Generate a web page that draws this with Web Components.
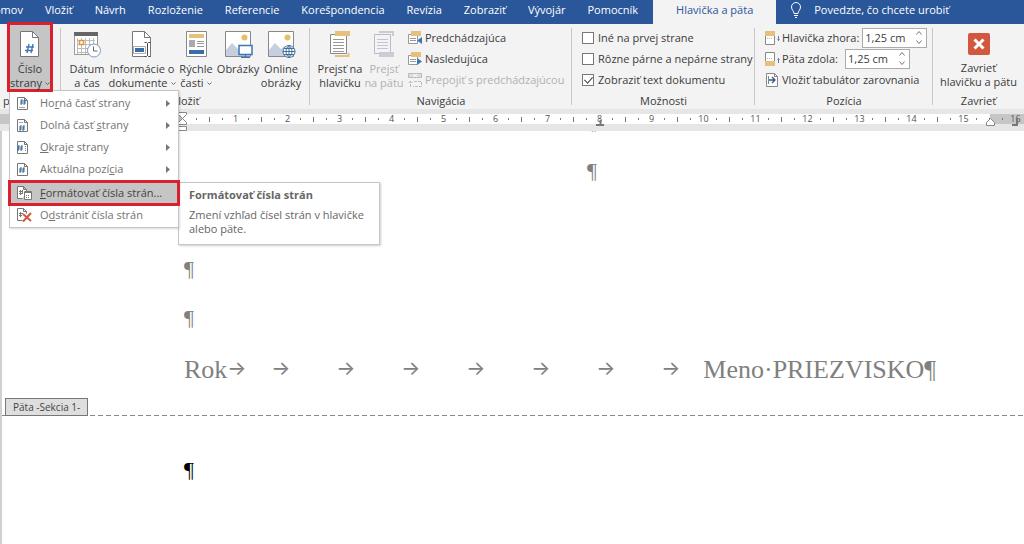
<!DOCTYPE html>
<html lang="sk">
<head>
<meta charset="utf-8">
<title>Hlavička a päta</title>
<style>
	html, body {
		height: 100%;
		margin: 0;
	}

	body {
		background: #fff;
		color: #3b3b3b;
		display: flex;
		flex-direction: column;
		font: 11px/14px "Open Sans", "Noto Sans", sans-serif;
		overflow: hidden;
	}
</style>
</head>
<body>
<ribbon-tabs>
	<ribbon-tab>Domov</ribbon-tab>
	<ribbon-tab>Vložiť</ribbon-tab>
	<ribbon-tab>Návrh</ribbon-tab>
	<ribbon-tab>Rozloženie</ribbon-tab>
	<ribbon-tab>Referencie</ribbon-tab>
	<ribbon-tab>Korešpondencia</ribbon-tab>
	<ribbon-tab>Revízia</ribbon-tab>
	<ribbon-tab>Zobraziť</ribbon-tab>
	<ribbon-tab>Vývojár</ribbon-tab>
	<ribbon-tab>Pomocník</ribbon-tab>
	<ribbon-tab active>Hlavička a päta</ribbon-tab>
	<ribbon-tab icon="bulb">Povedzte, čo chcete urobiť</ribbon-tab>
</ribbon-tabs>

<ribbon-bar>
	<ribbon-group label="päta" style="--w: 61px; --align: left; --pad: 10px">
		<ribbon-button icon="pageNumber" pressed arrow style="--w: 40px">Číslo<br>strany</ribbon-button>
		<drop-menu slot="popup">
			<menu-item icon="top" sub>Ho<u>r</u>ná časť strany</menu-item>
			<menu-item icon="bottom" sub>Dolná časť <u>s</u>trany</menu-item>
			<menu-item icon="margins" sub><u>O</u>kraje strany</menu-item>
			<menu-item icon="current" sub>Aktuálna pozí<u>c</u>ia</menu-item>
			<menu-item icon="format" marked><u>F</u>ormátovať čísla strán...</menu-item>
			<menu-item icon="remove">O<u>d</u>strániť čísla strán</menu-item>
		</drop-menu>
		<tool-tip slot="popup">
			<b slot="title">Formátovať čísla strán</b>
			Zmení vzhľad čísel strán v hlavičke alebo päte.
		</tool-tip>
	</ribbon-group>
	<ribbon-group label="Vložiť" style="--w: 249px">
		<ribbon-button icon="date" style="--w: 52px">Dátum<br>a čas</ribbon-button>
		<ribbon-button icon="info" arrow style="--w: 58px">Informácie o<br>dokumente</ribbon-button>
		<ribbon-button icon="parts" arrow style="--w: 50px">Rýchle<br>časti</ribbon-button>
		<ribbon-button icon="pictures" style="--w: 34px">Obrázky</ribbon-button>
		<ribbon-button icon="online" style="--w: 52px">Online<br>obrázky</ribbon-button>
	</ribbon-group>
	<ribbon-group label="Navigácia" style="--w: 262px; --pad: 8px">
		<ribbon-button icon="header" style="--w: 44px">Prejsť na<br>hlavičku</ribbon-button>
		<ribbon-button icon="footer" disabled style="--w: 44px">Prejsť<br>na pätu</ribbon-button>
		<ribbon-stack>
			<small-button icon="prev">Predchádzajúca</small-button>
			<small-button icon="next">Nasledujúca</small-button>
			<small-button icon="link" disabled>Prepojiť s predchádzajúcou</small-button>
		</ribbon-stack>
	</ribbon-group>
	<ribbon-group label="Možnosti" style="--w: 183px; --pad: 8px">
		<ribbon-stack>
			<check-option label="Iné na prvej strane"></check-option>
			<check-option label="Rôzne párne a nepárne strany"></check-option>
			<check-option label="Zobraziť text dokumentu" checked></check-option>
		</ribbon-stack>
	</ribbon-group>
	<ribbon-group label="Pozícia" style="--w: 178px; --pad: 8px">
		<ribbon-stack>
			<spin-option icon="fromTop" label="Hlavička zhora:" value="1,25 cm"></spin-option>
			<spin-option icon="fromBottom" label="Päta zdola:" value="1,25 cm"></spin-option>
			<small-button icon="tab">Vložiť tabulátor zarovnania</small-button>
		</ribbon-stack>
	</ribbon-group>
	<ribbon-group label="Zavrieť" last style="--w: 91px">
		<ribbon-button icon="close" style="--w: 91px">Zavrieť<br>hlavičku a pätu</ribbon-button>
	</ribbon-group>
</ribbon-bar>

<page-ruler></page-ruler>

<doc-page>
	<doc-line center>¶</doc-line>
	<doc-line center>¶</doc-line>
	<doc-line></doc-line>
	<doc-line>¶</doc-line>
	<doc-line>¶</doc-line>
	<doc-line class="footer" tabs="8"><span slot="start">Rok</span>Meno·PRIEZVISKO¶</doc-line>
	<section-mark>Päta -Sekcia 1-</section-mark>
	<doc-line class="body">¶</doc-line>
</doc-page>

<script>
const sheet = '<path d="M.5.5h12l6 6v19H.5z" fill="#fff" stroke="#777"/><path d="M12.5.5v6h6" fill="none" stroke="#777"/>';
const smallSheet = '<path d="M.5.5h7l3 3v9H.5z" fill="#fff" stroke="#777"/><path d="M7.5.5v3h3" fill="none" stroke="#777"/>';
const hash = (x, y) => `<path d="M${x + 2} ${y}l-1 6M${x + 5} ${y}l-1 6M${x} ${y + 2}h6M${x} ${y + 4}h6" stroke="#41719c" fill="none"/>`;
const picture = '<path d="M.5.5h25v25H.5z" fill="#fff" stroke="#888"/><path d="M1 25V19l6-7 6 6 3-3 9 9v1z" fill="#c5cfdd"/><circle cx="19.500" cy="6.500" r="3" fill="#e8bd6a"/>';

// name: [width, height, markup]
const icons = {
	bulb: [12, 16, '<path d="M4 11.500C4 9 1.500 8 1.500 5a4.500 4.500 0 0 1 9 0c0 3-2.500 4-2.500 6.500zM4 13.500h4M5 15.500h2" fill="none" stroke="#fff"/>'],
	pageNumber: [20, 26, sheet + '<path d="M9 13l-2 9M13 13l-2 9M6 16h8M5 19.500h8" stroke="#3e76b5" stroke-width="1.300" fill="none"/>'],
	date: [27, 26, '<path d="M.5 1.500h23v22H.5z" fill="#fff" stroke="#999"/><path d="M0 1h24v4H0z" fill="#666"/><path d="M3 9.500h18M3 13.500h18M3 17.500h18M3 21.500h12M3.500 7v16M7.500 7v16M11.500 7v16M15.500 7v16M19.500 7v10" stroke="#bbb" fill="none"/><path d="M5.500 9.500h4v4h-4z" fill="#fff" stroke="#e0963c" stroke-width="1.500"/><circle cx="20" cy="19.500" r="6.500" fill="#fff" stroke="#7b9cc0"/><path d="M19.500 15.500v4.500h4" fill="none" stroke="#666"/>'],
	info: [20, 26, sheet + '<path d="M3 17h9v4H3z" fill="#3b6ba8"/><path d="M1.500 15.500h12v7h-12z" fill="none" stroke="#aaa"/><path d="M14 10h4v16h-4z" fill="#fff"/><path d="M12.500 11.500h2l1 1 1-1h2M12.500 25.500h2l1-1 1 1h2M15.500 12.500v12" fill="none" stroke="#444"/>'],
	parts: [21, 26, '<path d="M.5.5h20v25H.5z" fill="#fff" stroke="#888"/><path d="M3 3h15v4H3z" fill="#e8c078"/><path d="M3 9h6v7H3z" fill="#aaa"/><path d="M11 10.500h7M11 12.500h7M11 15.500h7" stroke="#999"/><path d="M3 19h15v4H3z" fill="#3b6ba8"/>'],
	pictures: [27, 26, picture + '<path d="M14 14.500h13v9H14z" fill="#fff" stroke="#3b76b5" stroke-width="1.500"/><path d="M20.500 24v2M16 26.500h9" stroke="#3b76b5"/>'],
	online: [27, 26, picture + '<circle cx="21" cy="20.500" r="6" fill="#fff" stroke="#41719c"/><path d="M15 20.500h12M16 17.500h10M16 23.500h10M21 14.500v12M21 14.500c-4 3-4 9 0 12M21 14.500c4 3 4 9 0 12" fill="none" stroke="#41719c"/>'],
	header: [20, 26, '<path d="M.5 3.500h16v19H.5z" fill="#fff" stroke="#888"/><path d="M5 0h15v5H5z" fill="#e6c07e"/><path d="M3 8.500h11M3 11.500h11M3 14.500h11M3 17.500h11M3 20.500h11" stroke="#999"/><path d="M5 25h14M18.500 22v4" stroke="#e6c07e" stroke-width="2"/>'],
	footer: [20, 26, '<path d="M.5 3.500h16v19H.5z" fill="#f4f4f8" stroke="#bbb"/><path d="M5 1h14v4" fill="none" stroke="#ccc" stroke-width="2"/><path d="M3 8.500h11M3 11.500h11M3 14.500h11M3 17.500h11" stroke="#c4c4cc"/><path d="M5 21h15v5H5z" fill="#ccccd4"/>'],
	prev: [14, 14, '<path d="M.5 3.500h9v9H.5z" fill="#fff" stroke="#999"/><path d="M3 0h10v5H3z" fill="#e6c07e"/><path d="M2 7.500h6M2 9.500h6" stroke="#999"/><path d="M14 6v7l-5-3.500z" fill="#3b76b5"/>'],
	next: [14, 14, '<path d="M.5 3.500h9v9H.5z" fill="#fff" stroke="#999"/><path d="M3 0h10v5H3z" fill="#e6c07e"/><path d="M2 7.500h6M2 9.500h6" stroke="#999"/><path d="M9 6v7l5-3.500z" fill="#3b76b5"/>'],
	link: [14, 14, '<path d="M.5.500h13v4H.5z" fill="#ddd" stroke="#bbb"/><path d="M5 1l4 3M9 1l-4 3" stroke="#fff"/><path d="M2.500 14V8M.5 10l2-2 2 2M6 8.500h7.500v5H5" fill="none" stroke="#bbb" stroke-dasharray="3 1"/>'],
	fromTop: [14, 14, '<path d="M.5 5v8.500h9V5" fill="#fff" stroke="#888"/><path d="M0 0h10v5H0z" fill="#e6c07e"/><path d="M2 7.500h6" stroke="#bbb" stroke-dasharray="1 1"/><path d="M13.500 5v5M12.500 8.500h2" fill="none" stroke="#557ba8"/>'],
	fromBottom: [14, 14, '<path d="M.5 9V.5h9V9" fill="#fff" stroke="#888"/><path d="M0 9h10v5H0z" fill="#e6c07e"/><path d="M2 6.500h6" stroke="#bbb" stroke-dasharray="1 1"/><path d="M13.500 6v5M12.500 7.500h2" fill="none" stroke="#557ba8"/>'],
	tab: [14, 14, '<path d="M1.500.5h8l3 3v10h-11z" fill="#fff" stroke="#888"/><path d="M9.500.5v3h3M3.500 3v8" fill="none" stroke="#888"/><path d="M4 7h6M7 4l3 3-3 3" fill="none" stroke="#35568a" stroke-width="1.300"/>'],
	close: [22, 22, '<rect width="22" height="22" rx="2" fill="#d1583f"/><path d="M6.500 6.500l9 9M15.500 6.500l-9 9" stroke="#fff" stroke-width="3"/>'],
	top: [14, 13, smallSheet + hash(3, 2) + '<path d="M2 10.500h6" stroke="#aaa"/>'],
	bottom: [14, 13, smallSheet + hash(2, 6) + '<path d="M2 3.500h4" stroke="#aaa"/>'],
	margins: [14, 13, smallSheet + hash(0, 4) + '<path d="M8 5.500h1M8 7.500h1M8 9.500h1" stroke="#888"/>'],
	current: [14, 13, smallSheet + hash(2, 4)],
	format: [16, 14, '<path d="M5.500 12.500h-5V.5h6l3 3v2M6.500.5v3h3" fill="#fff" stroke="#777"/><path d="M2 5.500h4M2 7.500h4M3.500 4v5M5.500 4v3" stroke="#777"/><path d="M7.500 5.500h7v8h-7z" fill="#fff" stroke="#777"/><path d="M8 6.500h6" stroke="#777"/><path d="M9 9.500h4M9 11.500h4" stroke="#777" stroke-dasharray="1 1"/>'],
	remove: [16, 14, '<path d="M5.500 12.500h-5V.5h6l3 3v2M6.500.5v3h3" fill="#fff" stroke="#777"/><path d="M2 5.500h4M2 7.500h3M3.500 4v5" stroke="#777"/><path d="M6 6l8 7M14 5l-8 8.500" stroke="#d1583f" stroke-width="2"/>']
};

const icon = name => {
	if (!icons[name]) return '';
	const [w, h, markup] = icons[name];
	return `<svg width="${w}" height="${h}" viewBox="0 0 ${w} ${h}" aria-hidden="true">${markup}</svg>`;
};

const resets = `
	*, :host { box-sizing: border-box; }
	svg { display: block; flex: none; overflow: visible; }
	button {
		background: none;
		border: 0;
		color: inherit;
		font: inherit;
		margin: 0;
		padding: 0;
		white-space: nowrap;
	}
`;

class BaseElement extends HTMLElement {
	constructor() {
		super();
		this.attachShadow({mode: 'open'});
	}

	connectedCallback() {
		this.shadowRoot.innerHTML = `<style>${resets}${this.css()}</style>${this.html()}`;
	}

	css() { return ''; }
	html() { return '<slot></slot>'; }
}

class RibbonTabs extends BaseElement {
	css() {
		return `
			:host {
				background: #2a579a;
				color: #fff;
				display: block;
				flex: none;
				overflow: hidden;
			}
			nav { display: flex; height: 24px; margin-left: -25px; }
		`;
	}
	html() { return '<nav><slot></slot></nav>'; }
}

class RibbonTab extends BaseElement {
	css() {
		return `
			:host { display: flex; }
			:host([active]) { background: #f3f3f3; color: #2a579a; margin-left: 4px; }
			button { align-items: center; display: flex; gap: 12px; padding: 0 11px 4px; }
			:host([active]) button { padding: 0 23px 4px; }
			:host([icon]) button { padding-left: 14px; }
		`;
	}
	html() { return `<button type="button">${icon(this.getAttribute('icon'))}<slot></slot></button>`; }
}

class RibbonBar extends BaseElement {
	css() {
		return `
			:host {
				background: #f3f3f3;
				display: flex;
				flex: none;
				position: relative;
				z-index: 1;
			}
		`;
	}
}

class RibbonGroup extends BaseElement {
	css() {
		return `
			:host {
				display: flex;
				flex: 0 0 var(--w);
				flex-direction: column;
				height: 85px;
				min-width: 0;
				padding: 1px 0;
				position: relative;
			}
			:host([last]) { flex: 1 0 var(--w); }
			:host(:not([last]))::after {
				background: #c8c8c8;
				bottom: 4px;
				content: '';
				position: absolute;
				right: 0;
				top: 4px;
				width: 1px;
			}
			.tools { display: flex; flex: 1; padding-left: var(--pad, 0); }
			:host([last]) .tools { justify-content: center; }
			.label { padding: 0 3px; text-align: var(--align, center); }
		`;
	}
	html() {
		return `
			<div class="tools"><slot></slot></div>
			<div class="label">${this.getAttribute('label')}</div>
			<slot name="popup"></slot>
		`;
	}
}

class RibbonStack extends BaseElement {
	css() { return ':host { display: flex; flex-direction: column; padding: 2px 0 0 2px; }'; }
}

class RibbonButton extends BaseElement {
	css() {
		return `
			:host { display: flex; flex: 0 0 var(--w); height: 64px; min-width: 0; }
			button {
				align-items: center;
				display: flex;
				flex: 1;
				flex-direction: column;
				gap: 5px;
				min-width: 0;
				padding-top: 6px;
			}
			.icon { align-items: center; display: flex; height: 26px; }
			.text { display: block; position: relative; }
			.arrow { display: inline-block; margin: 0 0 2px 3px; vertical-align: middle; }
			:host([pressed]) { background: #c5c5c5; outline: 3px solid #d8202e; z-index: 3; }
			:host([disabled]) { color: #b1b1b1; }
		`;
	}
	html() {
		const arrow = this.hasAttribute('arrow')
			? '<svg class="arrow" width="5" height="3"><path d="M.5.5l2 2 2-2" fill="none" stroke="#666"/></svg>' : '';
		return `
			<button type="button" ${this.hasAttribute('disabled') ? 'disabled' : ''}>
				<span class="icon">${icon(this.getAttribute('icon'))}</span>
				<span class="text"><slot></slot>${arrow}</span>
			</button>
		`;
	}
}

class SmallButton extends BaseElement {
	css() {
		return `
			:host { display: flex; height: 21px; }
			:host([disabled]) { color: #b1b1b1; }
			button { align-items: center; display: flex; gap: 3px; }
		`;
	}
	html() {
		return `<button type="button" ${this.hasAttribute('disabled') ? 'disabled' : ''}>${icon(this.getAttribute('icon'))}<slot></slot></button>`;
	}
}

class CheckOption extends BaseElement {
	css() {
		return `
			:host { display: flex; height: 21px; }
			label { align-items: center; display: flex; gap: 4px; white-space: nowrap; }
			input {
				appearance: none;
				background: #fff;
				border: 1px solid #777;
				display: grid;
				height: 12px;
				margin: 0;
				place-items: center;
				width: 12px;
			}
			input:checked::before {
				border: solid #444;
				border-width: 0 1px 1px 0;
				content: '';
				height: 7px;
				margin-bottom: 2px;
				transform: rotate(42deg);
				width: 4px;
			}
		`;
	}
	html() {
		return `<label><input type="checkbox" ${this.hasAttribute('checked') ? 'checked' : ''}>${this.getAttribute('label')}</label>`;
	}
}

class SpinOption extends BaseElement {
	css() {
		return `
			:host { align-items: center; display: flex; gap: 3px; height: 21px; }
			label { min-width: 60px; white-space: nowrap; }
			.box { background: #fff; border: 1px solid #ababab; display: flex; height: 20px; width: 65px; }
			input {
				background: none;
				border: 0;
				color: inherit;
				flex: 1;
				font: inherit;
				min-width: 0;
				outline: 0;
				padding: 0 0 0 2px;
			}
			.arrows { display: flex; flex-direction: column; width: 14px; }
			.arrows button { display: grid; flex: 1; place-items: center; }
		`;
	}
	html() {
		return `
			${icon(this.getAttribute('icon'))}
			<label for="value">${this.getAttribute('label')}</label>
			<div class="box">
				<input id="value" type="text" value="${this.getAttribute('value')}">
				<div class="arrows">
					<button type="button" aria-label="Viac"><svg width="6" height="4"><path d="M.5 3.500l2.500-3 2.500 3" fill="none" stroke="#777"/></svg></button>
					<button type="button" aria-label="Menej"><svg width="6" height="4"><path d="M.5.5l2.500 3 2.500-3" fill="none" stroke="#777"/></svg></button>
				</div>
			</div>
		`;
	}
}

class DropMenu extends BaseElement {
	css() {
		return `
			:host {
				background: #fff;
				border: 1px solid #c6c6c6;
				box-shadow: 1px 1px 2px rgba(0, 0, 0, .15);
				color: #737373;
				display: flex;
				flex-direction: column;
				left: 9px;
				padding: 1px 0;
				position: absolute;
				top: 66px;
				width: 170px;
				z-index: 2;
			}
		`;
	}
}

class MenuItem extends BaseElement {
	css() {
		return `
			:host { display: flex; height: 22px; }
			:host([marked]) {
				background: #c5c5c5;
				color: #444;
				height: 20px;
				margin: 3px 1px 1px;
				outline: 3px solid #d8202e;
			}
			button { align-items: center; display: flex; flex: 1; padding: 0 8px 0 7px; }
			:host([marked]) button { padding: 0 7px 0 6px; }
			.icon { width: 23px; }
			.text { flex: 1; text-align: left; }
		`;
	}
	html() {
		const sub = this.hasAttribute('sub')
			? '<svg width="4" height="7"><path d="M0 0l4 3.500-4 3.500z" fill="#777"/></svg>' : '';
		return `
			<button type="button">
				<span class="icon">${icon(this.getAttribute('icon'))}</span>
				<span class="text"><slot></slot></span>${sub}
			</button>
		`;
	}
}

class ToolTip extends BaseElement {
	css() {
		return `
			:host {
				background: #fff;
				border: 1px solid #c6c6c6;
				box-shadow: 1px 1px 2px rgba(0, 0, 0, .2);
				color: #666;
				display: flex;
				flex-direction: column;
				gap: 6px;
				left: 178px;
				padding: 5px 10px 8px;
				position: absolute;
				top: 158px;
				width: 202px;
				z-index: 1;
			}
		`;
	}
	html() { return '<slot name="title"></slot><div><slot></slot></div>'; }
}

class PageRuler extends BaseElement {
	css() {
		return `
			:host {
				background: #e6e6e6;
				color: #555;
				display: block;
				flex: none;
				font-size: 9px;
				height: 22px;
				line-height: 10px;
				overflow: hidden;
				padding-top: 5px;
				position: relative;
			}
			.scale {
				background: linear-gradient(90deg, #c6c6c6 183px, #fff 183px 990px, #c6c6c6 990px);
				display: flex;
				height: 10px;
				padding-left: 190px;
			}
			.cm { display: grid; flex: none; grid-template-columns: repeat(4, 13px); justify-items: center; align-items: center; }
			.cm span { display: flex; justify-content: center; width: 0; }
			i { background: #777; height: 2px; width: 1px; }
			i.half { height: 5px; }
			.mark { position: absolute; }
		`;
	}
	html() {
		let cells = '';
		for (let n = 1; n < 17; n++) {
			cells += `<div class="cm"><i></i><i class="${n === 16 ? '' : 'half'}"></i><i></i><span>${n}</span></div>`;
		}
		return `
			<div class="scale">${cells}</div>
			<svg class="mark" style="left: 178px; top: 3px" width="10" height="19">
				<path d="M.5.5h8v2l-8 8v2h8v-2l-8-8zM.5 14.500h8v4h-8z" fill="#fff" stroke="#888"/>
			</svg>
			<svg class="mark" style="left: 596px; top: 11px" width="9" height="6"><path d="M4.500 0v4M0 5h8" stroke="#777" stroke-width="2"/></svg>
			<svg class="mark" style="left: 986px; top: 9px" width="10" height="8"><path d="M.5 7.500v-3l4-4 4 4v3z" fill="#fff" stroke="#888"/></svg>
			<svg class="mark" style="left: 1012px; top: 10px" width="8" height="8"><path d="M5 0v6H0" fill="none" stroke="#777" stroke-width="2"/></svg>
		`;
	}
}

class DocPage extends BaseElement {
	css() {
		return `
			:host {
				border-left: 2px solid #d0d0d0;
				color: #808080;
				display: block;
				flex: 1;
				min-height: 0;
				overflow: hidden;
			}
			main { margin-top: -34px; }
			::slotted(.footer) { margin-top: 3px; }
			::slotted(.body) { color: #000; margin-top: 29px; }
		`;
	}
	html() { return '<main><slot></slot></main>'; }
}

class DocLine extends BaseElement {
	css() {
		return `
			:host {
				display: flex;
				font: 22px/49px "Liberation Serif", serif;
				min-height: 49px;
				padding: 0 24px 0 182px;
			}
			:host([center]) { justify-content: center; }
			:host([tabs]) { font-size: 26px; }
			.tabs { display: flex; }
			.tabs span {
				font: 20px/47px Inter, "DejaVu Sans", sans-serif;
				flex: 0 0 65px;
			}
			.tabs span:first-child { flex-basis: 44px; }
			.tabs span:last-child { flex-basis: 42px; }
		`;
	}
	html() {
		const tabs = '<span>→</span>'.repeat(Number(this.getAttribute('tabs')));
		return `<slot name="start"></slot><div class="tabs">${tabs}</div><slot></slot>`;
	}
}

class SectionMark extends BaseElement {
	css() {
		return `
			:host {
				background: repeating-linear-gradient(90deg, #888 0 5px, transparent 5px 8px) bottom / 100% 1px no-repeat;
				color: #444;
				display: flex;
				font-size: 10px;
				margin-top: 4px;
				padding-left: 3px;
			}
			span { background: #dedede; border: 1px solid #777; padding: 1px 7px; }
		`;
	}
	html() { return '<span><slot></slot></span>'; }
}

customElements.define('ribbon-tabs', RibbonTabs);
customElements.define('ribbon-tab', RibbonTab);
customElements.define('ribbon-bar', RibbonBar);
customElements.define('ribbon-group', RibbonGroup);
customElements.define('ribbon-stack', RibbonStack);
customElements.define('ribbon-button', RibbonButton);
customElements.define('small-button', SmallButton);
customElements.define('check-option', CheckOption);
customElements.define('spin-option', SpinOption);
customElements.define('drop-menu', DropMenu);
customElements.define('menu-item', MenuItem);
customElements.define('tool-tip', ToolTip);
customElements.define('page-ruler', PageRuler);
customElements.define('doc-page', DocPage);
customElements.define('doc-line', DocLine);
customElements.define('section-mark', SectionMark);
</script>
</body>
</html>
